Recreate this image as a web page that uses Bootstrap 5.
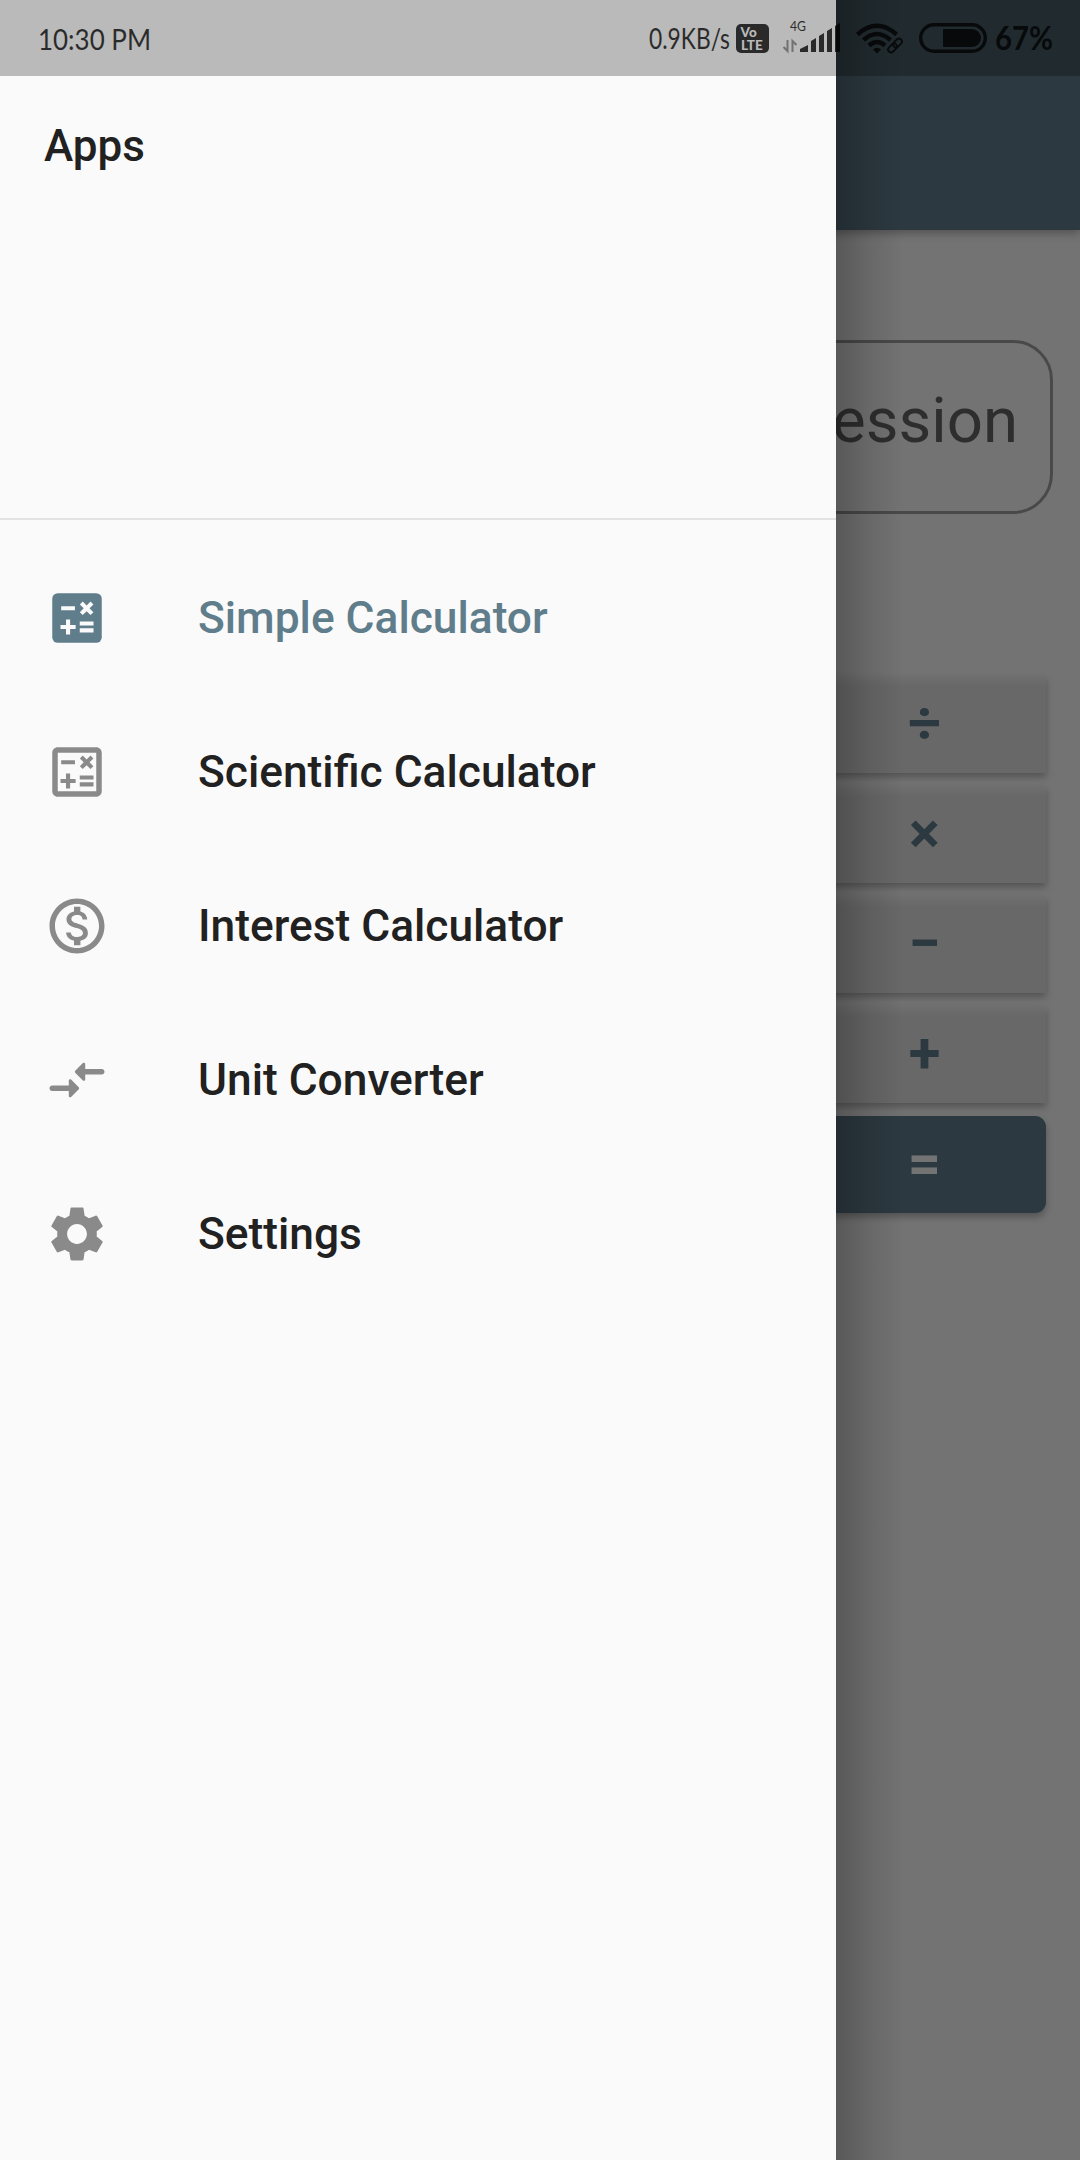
<!DOCTYPE html>
<html lang="en">
<head>
<meta charset="utf-8">
<title>Calculator</title>
<link href="https://cdn.jsdelivr.net/npm/bootstrap@5.3.0/dist/css/bootstrap.min.css" rel="stylesheet">
<style>
body{font-family:Roboto,sans-serif;background:#fafafa;color:#212121}
.screen{width:1080px;height:2160px}
.appbar{height:230px;background:linear-gradient(#485e68 76px,#607d8b 76px);box-shadow:0 3px 9px rgba(0,0,0,.3);flex:none}
.expr-box{margin:110px 27px 0;height:174px;border:3px solid #a0a0a0;border-radius:40px;padding:0 32px 13px;font-size:63.500px;color:#646464}
.keys{margin:162px 34px 0;gap:13px}
.key{width:243px;height:97px;font-size:58px;font-weight:700;line-height:1;padding-bottom:4px;color:#607d8b;background:linear-gradient(#f2f2f2,#e3e3e3 10px);box-shadow:0 4px 7px rgba(0,0,0,.28)}
.key-eq{background:#607d8b;color:#fafafa;border-radius:11px}
.scrim{background:linear-gradient(90deg,rgba(0,0,0,.24),rgba(0,0,0,.1) 32px,transparent 68px) 836px 0 no-repeat,rgba(0,0,0,.542)}
.drawer{width:836px;background:#fafafa}
.drawer-head{height:520px;border-bottom:2px solid #e3e3e3;padding:113px 44px 0;font-size:44px;font-weight:500;line-height:66px}
.drawer-list{padding-top:21px}
.drawer-item{height:154px;padding:0 44px;gap:88px;font-size:44.300px;font-weight:500;color:#212121}
.drawer-item svg{width:66px;height:66px;fill:#8a8a8a;flex:none}
.drawer-item.chosen,.drawer-item.chosen svg{color:#607d8b;fill:#607d8b}
.status-tint{width:836px;height:76px;background:#bababa}
.status{height:76px;opacity:.77;color:#000}
.status text{font-family:Lato,sans-serif}
</style>
<script src="https://cdn.jsdelivr.net/npm/bootstrap@5.3.0/dist/js/bootstrap.bundle.min.js"></script>
</head>
<body>
<div class="screen position-relative overflow-hidden">
  <main class="d-flex flex-column h-100">
    <header class="appbar"></header>
    <div class="expr-box d-flex align-items-center justify-content-end">ession</div>
    <div class="keys d-flex flex-column align-items-end">
      <div class="key d-flex align-items-center justify-content-center">÷</div>
      <div class="key d-flex align-items-center justify-content-center">×</div>
      <div class="key d-flex align-items-center justify-content-center">−</div>
      <div class="key d-flex align-items-center justify-content-center">+</div>
      <div class="key key-eq d-flex align-items-center justify-content-center">=</div>
    </div>
  </main>
  <div class="scrim position-absolute top-0 start-0 w-100 h-100"></div>
  <nav class="drawer position-absolute top-0 start-0 h-100">
    <div class="drawer-head">Apps</div>
    <div class="drawer-list d-flex flex-column">
      <a class="drawer-item chosen d-flex align-items-center text-decoration-none"><svg viewBox="0 0 24 24"><path d="M19 3H5a2 2 0 0 0-2 2v14a2 2 0 0 0 2 2h14a2 2 0 0 0 2-2V5a2 2 0 0 0-2-2z"/><path fill="#fafafa" d="M6.25 7.72h5v1.5h-5zM13 15.75h5v1.5h-5zM13 13.25h5v1.5h-5zM8 18h1.5v-2h2v-1.5h-2v-2H8v2H6V16h2zM14.09 10.95l1.41-1.41 1.41 1.41 1.06-1.06-1.41-1.42 1.41-1.41L16.91 6 15.5 7.41 14.09 6l-1.06 1.06 1.41 1.41-1.41 1.42z"/></svg><span>Simple Calculator</span></a>
      <a class="drawer-item d-flex align-items-center text-decoration-none"><svg viewBox="0 0 24 24"><path d="M19 3H5c-1.1 0-2 .9-2 2v14c0 1.100.9 2 2 2h14c1.100 0 2-.9 2-2V5c0-1.100-.9-2-2-2zm0 16H5V5h14v14z"/><path d="M6.25 7.72h5v1.5h-5zM13 15.75h5v1.5h-5zM13 13.25h5v1.5h-5zM8 18h1.5v-2h2v-1.5h-2v-2H8v2H6V16h2zM14.09 10.95l1.41-1.41 1.41 1.41 1.06-1.06-1.41-1.42 1.41-1.41L16.91 6 15.5 7.41 14.09 6l-1.06 1.06 1.41 1.41-1.41 1.42z"/></svg><span>Scientific Calculator</span></a>
      <a class="drawer-item d-flex align-items-center text-decoration-none"><svg viewBox="0 0 24 24"><path d="M12 2C6.48 2 2 6.48 2 12s4.480 10 10 10 10-4.480 10-10S17.520 2 12 2zm0 18c-4.410 0-8-3.590-8-8s3.590-8 8-8 8 3.590 8 8-3.590 8-8 8zm.31-8.860c-1.770-.45-2.340-.94-2.340-1.670 0-.84.79-1.430 2.100-1.430 1.380 0 1.900.66 1.940 1.640h1.710c-.05-1.340-.87-2.570-2.490-2.970V5H10.900v1.690c-1.510.32-2.720 1.300-2.720 2.810 0 1.790 1.490 2.690 3.660 3.210 1.950.46 2.340 1.150 2.340 1.870 0 .53-.39 1.390-2.100 1.390-1.600 0-2.230-.72-2.320-1.640H8.040c.1 1.700 1.360 2.660 2.860 2.970V19h2.340v-1.670c1.520-.29 2.720-1.160 2.730-2.770-.01-2.200-1.900-2.960-3.660-3.420z"/></svg><span>Interest Calculator</span></a>
      <a class="drawer-item d-flex align-items-center text-decoration-none"><svg viewBox="0 0 24 24"><path d="M9.010 14H3c-.55 0-1 .45-1 1s.45 1 1 1h6.010v1.790c0 .45.54.67.85.35l2.780-2.790c.19-.2.19-.51 0-.71l-2.780-2.790c-.31-.32-.85-.09-.85.35V14zm5.980-2.210V10H21c.55 0 1-.45 1-1s-.45-1-1-1h-6.010V6.210c0-.45-.54-.67-.85-.35l-2.780 2.790c-.19.2-.19.51 0 .71l2.780 2.790c.31.31.85.09.85-.36z"/></svg><span>Unit Converter</span></a>
      <a class="drawer-item d-flex align-items-center text-decoration-none"><svg viewBox="0 0 24 24"><path d="M19.140 12.940c.04-.3.06-.61.06-.94 0-.32-.02-.64-.07-.94l2.030-1.580c.18-.14.23-.41.12-.61l-1.920-3.320c-.12-.22-.37-.29-.59-.22l-2.390.96c-.5-.38-1.030-.7-1.620-.94L14.400 2.810c-.04-.24-.24-.41-.48-.41h-3.840c-.24 0-.43.17-.47.41L9.250 5.350C8.660 5.590 8.120 5.920 7.630 6.290L5.240 5.330c-.22-.08-.47 0-.59.22L2.740 8.870c-.12.21-.08.47.12.61l2.030 1.580C4.840 11.360 4.800 11.690 4.800 12s.02.64.07.94l-2.030 1.580c-.18.14-.23.41-.12.61l1.920 3.320c.12.22.37.29.59.22l2.390-.96c.5.38 1.030.7 1.620.94l.36 2.540c.05.24.24.41.48.41h3.840c.24 0 .44-.17.47-.41l.36-2.540c.59-.24 1.130-.56 1.620-.94l2.390.96c.22.08.47 0 .59-.22l1.920-3.320c.12-.22.07-.47-.12-.61zM12 15.600c-1.980 0-3.600-1.620-3.600-3.600s1.620-3.600 3.600-3.600 3.600 1.620 3.600 3.600-1.620 3.600-3.600 3.600z"/></svg><span>Settings</span></a>
    </div>
  </nav>
  <div class="status-tint position-absolute top-0 start-0"></div>
  <div class="status position-absolute top-0 start-0 w-100 d-flex justify-content-between">
    <svg width="200" height="76" viewBox="0 0 200 76"><text x="38" y="50" font-size="29" textLength="113" lengthAdjust="spacingAndGlyphs">10:30 PM</text></svg>
    <svg width="440" height="76" viewBox="640 0 440 76">
      <text x="649" y="49" font-size="28" textLength="81" lengthAdjust="spacingAndGlyphs">0.9KB/s</text>
      <rect x="736" y="24" width="33" height="29" rx="5"/>
      <text fill="#bababa" font-weight="900" font-size="13.500"><tspan x="740.500" y="37">Vo</tspan><tspan x="741" y="50">LTE</tspan></text>
      <text x="790" y="31" font-size="13" textLength="16" lengthAdjust="spacingAndGlyphs">4G</text>
      <path d="M787.500 40v11l-4-4M792.500 52V41l4 4" fill="none" stroke="#000" stroke-opacity=".5" stroke-width="2"/>
      <path d="M800 52v-3l8-4v7zM811 52V41l5-3v14zM819 52V36l5-3v19zM827 52V31l5-3v24zM835 52V26l5-3v29z"/>
      <g fill="none" stroke="#000" stroke-width="4.500"><path d="M857.500 34.500q19.500-17.500 39 0M863.500 40q13.500-12 27 0M869 45.500q8-7 16 0"/></g>
      <path d="M873 49.500q4-3.500 8 0l-4 4z"/>
      <g fill="none" stroke="#000" stroke-width="1.800" transform="rotate(-45 895 45.500)"><rect x="886.500" y="42.500" width="10" height="6" rx="3"/><rect x="893.500" y="42.500" width="10" height="6" rx="3"/></g>
      <rect x="920.700" y="24.700" width="64.600" height="26.600" rx="13.300" fill="none" stroke="#000" stroke-width="3.400"/>
      <path d="M944 29h28a9 9 0 0 1 0 18h-28a1 1 0 0 1-1-1V30a1 1 0 0 1 1-1z"/>
      <text x="995" y="50" font-size="33" font-weight="700" textLength="58" lengthAdjust="spacingAndGlyphs">67%</text>
    </svg>
  </div>
</div>
</body>
</html>
